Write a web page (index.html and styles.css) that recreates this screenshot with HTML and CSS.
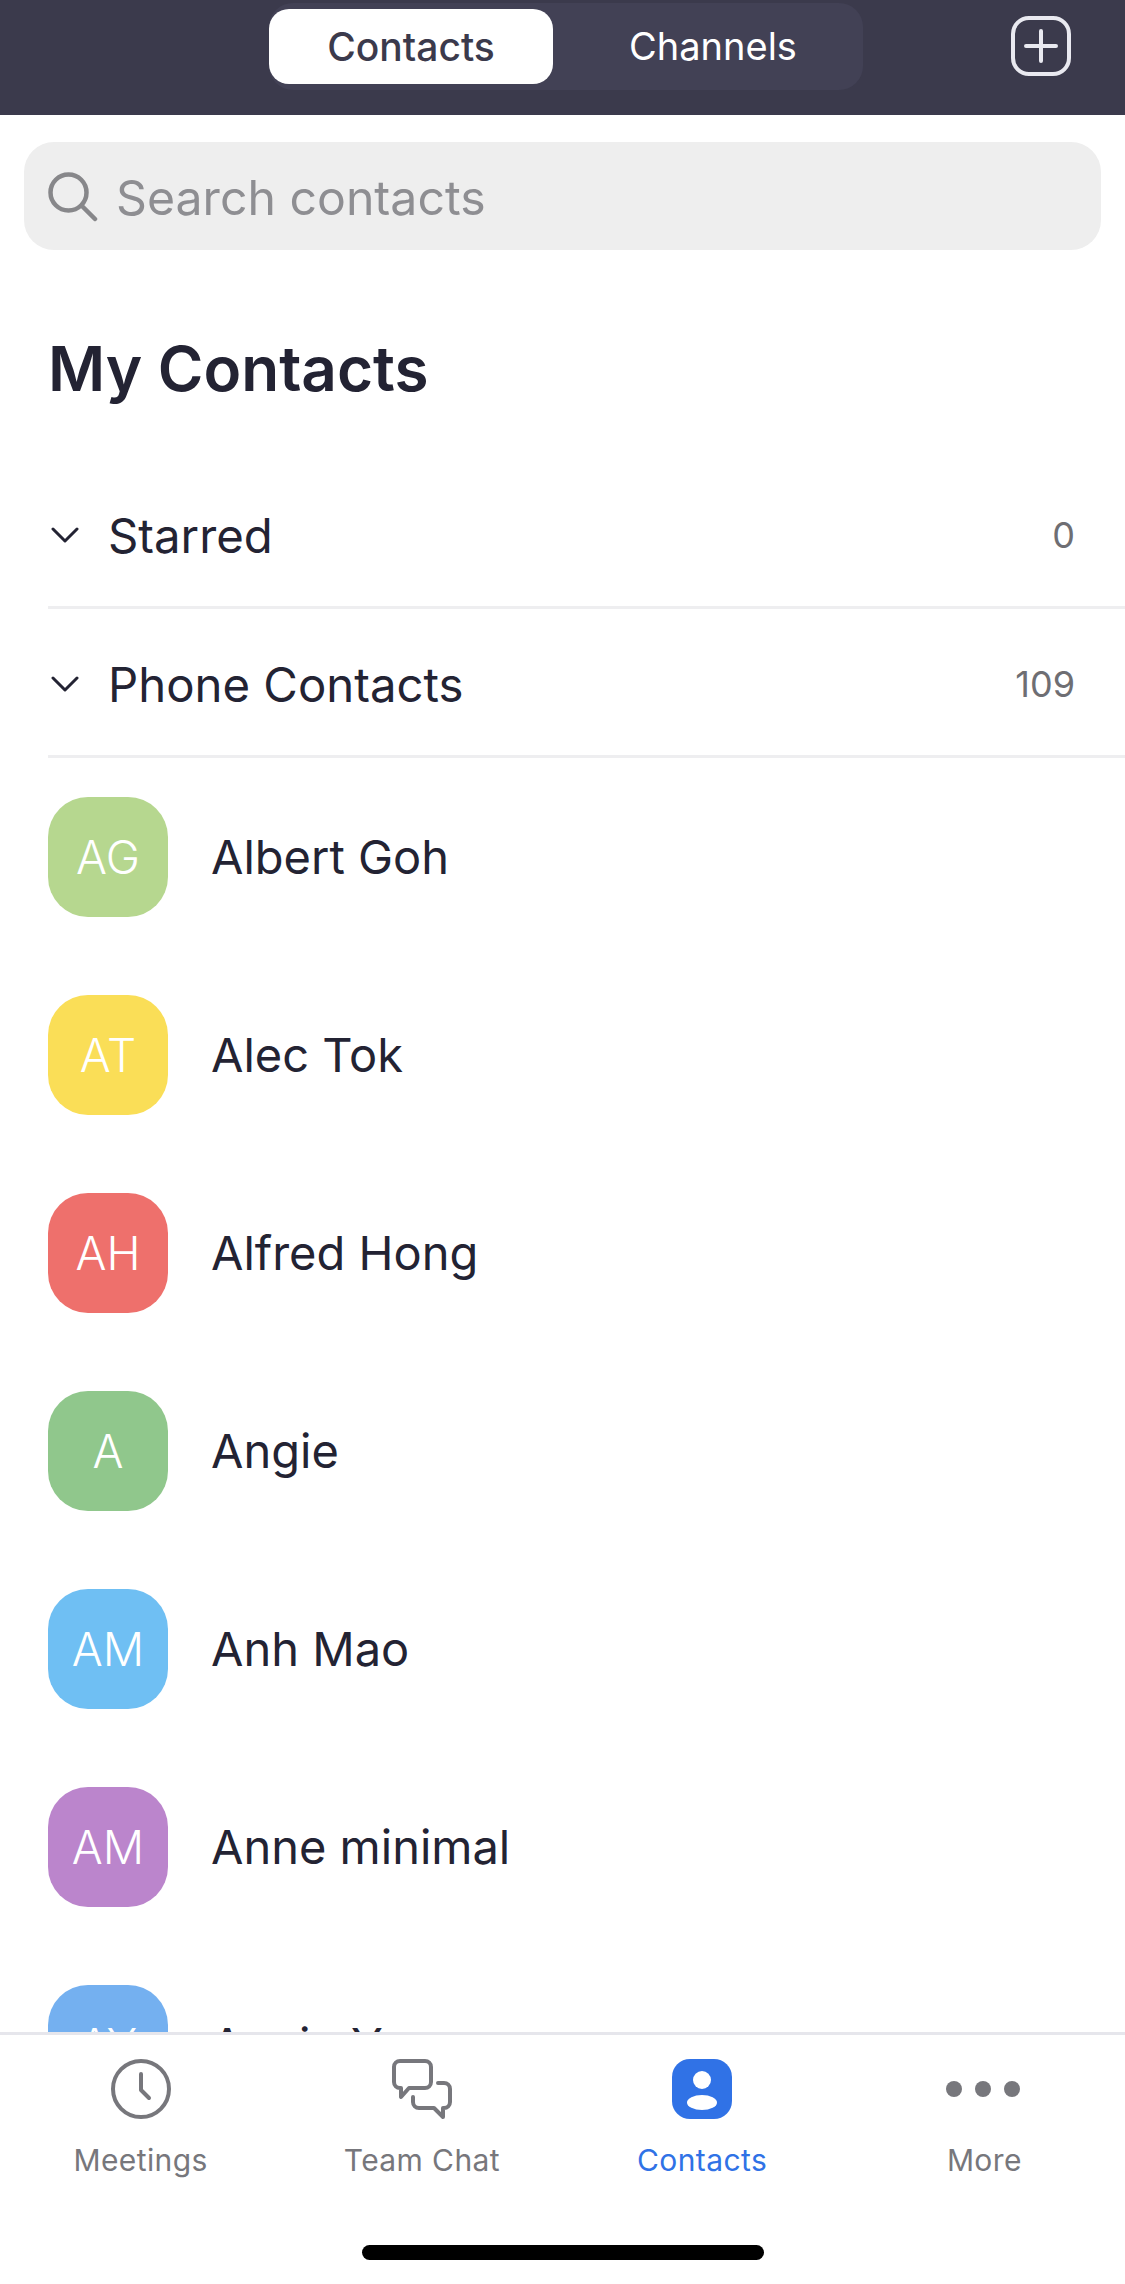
FILE: index.html
```html
<!DOCTYPE html>
<html lang="en">
<head>
    <meta charset="UTF-8">
    <meta name="viewport" content="width=device-width, initial-scale=1.0">
    <title>Contacts</title>
    <link rel="stylesheet" href="styles.css">
</head>
<body>
    <header class="topbar">
        <div class="tabs">
            <div class="tab active">Contacts</div>
            <div class="tab">Channels</div>
        </div>
        <svg class="add-icon" viewBox="0 0 60 60" fill="none" stroke="#e9e9f0" stroke-width="4" stroke-linecap="round">
            <rect x="2" y="2" width="56" height="56" rx="16"/>
            <path d="M30 15V45M15 30H45"/>
        </svg>
    </header>

    <main class="content">
        <div class="search">
            <svg class="search-icon" viewBox="0 0 50 50" fill="none" stroke="#87878a" stroke-width="4.5" stroke-linecap="round">
                <circle cx="20.5" cy="20.5" r="18"/>
                <path d="M33.5 33.5L47 47"/>
            </svg>
            <span>Search contacts</span>
        </div>

        <h1>My Contacts</h1>

        <div class="group">
            <svg class="chevron" viewBox="0 0 28 16" fill="none" stroke="#232333" stroke-width="3" stroke-linecap="round" stroke-linejoin="round">
                <path d="M2 2L14 14L26 2"/>
            </svg>
            <span class="group-name">Starred</span>
            <span class="count">0</span>
        </div>
        <div class="group">
            <svg class="chevron" viewBox="0 0 28 16" fill="none" stroke="#232333" stroke-width="3" stroke-linecap="round" stroke-linejoin="round">
                <path d="M2 2L14 14L26 2"/>
            </svg>
            <span class="group-name">Phone Contacts</span>
            <span class="count">109</span>
        </div>

        <div class="contact"><div class="avatar green">AG</div><span>Albert Goh</span></div>
        <div class="contact"><div class="avatar yellow">AT</div><span>Alec Tok</span></div>
        <div class="contact"><div class="avatar red">AH</div><span>Alfred Hong</span></div>
        <div class="contact"><div class="avatar leaf">A</div><span>Angie</span></div>
        <div class="contact"><div class="avatar sky">AM</div><span>Anh Mao</span></div>
        <div class="contact"><div class="avatar purple">AM</div><span>Anne minimal</span></div>
        <div class="contact"><div class="avatar blue">AY</div><span>Annie Y</span></div>
    </main>

    <nav class="tabbar">
        <div class="nav-item">
            <svg viewBox="0 0 60 60" fill="none" stroke="#77777c" stroke-width="4" stroke-linecap="round" stroke-linejoin="round">
                <circle cx="30" cy="30" r="28"/>
                <path d="M30 15V31L38 39"/>
            </svg>
            <span>Meetings</span>
        </div>
        <div class="nav-item">
            <svg viewBox="0 0 60 60" fill="none" stroke="#77777c" stroke-width="4" stroke-linecap="round" stroke-linejoin="round">
                <path d="M8 2H33A6 6 0 0 1 39 8V23A6 6 0 0 1 33 29H17L9 38V29H8A6 6 0 0 1 2 23V8A6 6 0 0 1 8 2Z"/>
                <path d="M46 24H52A6 6 0 0 1 58 30V43A6 6 0 0 1 52 49H51V58L42 49H27A6 6 0 0 1 21 43V38"/>
            </svg>
            <span>Team Chat</span>
        </div>
        <div class="nav-item current">
            <svg viewBox="0 0 60 60">
                <rect width="60" height="60" rx="18" fill="#3072e6"/>
                <circle cx="30" cy="21" r="9" fill="#fff"/>
                <ellipse cx="30" cy="43.5" rx="15" ry="7.5" fill="#fff"/>
            </svg>
            <span>Contacts</span>
        </div>
        <div class="nav-item">
            <svg viewBox="0 0 60 60" fill="#77777c">
                <circle cx="0" cy="30" r="8"/>
                <circle cx="29" cy="30" r="8"/>
                <circle cx="58" cy="30" r="8"/>
            </svg>
            <span>More</span>
        </div>
    </nav>

    <div class="home-bar"></div>
</body>
</html>
```

FILE: styles.css
```css
* {
    box-sizing: border-box;
}

html, body {
    margin: 0;
    height: 2284px;
    overflow: hidden;
}

body {
    display: flex;
    flex-direction: column;
    width: 1125px;
    background: #fff;
    font-family: 'Inter', 'Liberation Sans', sans-serif;
    color: #232333;
}

/* Top bar */
.topbar {
    flex: none;
    display: grid;
    grid-template-columns: 269px auto 1fr;
    height: 115px;
    padding-top: 3px;
    background: #3b3a4c;
}

.tabs {
    grid-column: 2;
    display: flex;
    align-items: center;
    width: 594px;
    height: 87px;
    border-radius: 24px;
    background: #424155;
}

.tab {
    width: 310px;
    height: 75px;
    padding-left: 10px;
    line-height: 75px;
    text-align: center;
    font-size: 38px;
    color: #fff;
    border-radius: 20px;
}

.tab.active {
    width: 284px;
    padding-left: 0;
    background: #fff;
    color: #3b3a4c;
    font-size: 39px;
    font-weight: 500;
}

.add-icon {
    grid-column: 3;
    justify-self: end;
    width: 60px;
    height: 60px;
    margin: 13px 54px 0 0;
}

/* Search and list */
.content {
    flex: 1;
    min-height: 0;
    overflow: hidden;
}

.search {
    display: flex;
    align-items: center;
    gap: 18px;
    height: 108px;
    margin: 27px 24px 0;
    padding: 2px 0 0 24px;
    border-radius: 30px;
    background: #eee;
    font-size: 48.2px;
    color: #8e8e92;
}

.search-icon {
    width: 50px;
    height: 50px;
}

h1 {
    margin: 0;
    padding: 85px 48px 0;
    height: 210px;
    font-size: 62px;
    font-weight: 600;
    line-height: 68px;
}

.group {
    display: flex;
    align-items: center;
    height: 149px;
    margin-left: 48px;
    padding: 4px 50px 0 3px;
    border-bottom: 3px solid #eeeef0;
    font-size: 47.3px;
}

.chevron {
    width: 28px;
    height: 16px;
    margin-right: 29px;
}

.group-name {
    flex: 1;
}

.count {
    font-size: 36px;
    color: #6e6e73;
}

.contact {
    display: flex;
    align-items: center;
    gap: 43px;
    height: 198px;
    padding-left: 48px;
    font-size: 47px;
}

.contact span {
    margin-top: -2px;
}

.avatar {
    flex: none;
    width: 120px;
    height: 120px;
    line-height: 120px;
    text-align: center;
    border-radius: 40px;
    font-size: 46px;
    font-weight: 300;
    color: #fff;
}

.green { background: #b6d78f; }
.yellow { background: #fade57; }
.red { background: #ee706c; }
.leaf { background: #90c78c; }
.sky { background: #6fbff3; }
.purple { background: #bb85cc; }
.blue { background: #74b0f0; }

/* Bottom nav */
.tabbar {
    flex: none;
    display: grid;
    grid-template-columns: repeat(4, 1fr);
    height: 252px;
    padding-top: 24px;
    border-top: 3px solid #e6e6ec;
    background: #fff;
}

.nav-item {
    display: flex;
    flex-direction: column;
    align-items: center;
    gap: 23px;
    font-size: 30px;
    letter-spacing: 0.4px;
    color: #77777c;
}

.nav-item svg {
    width: 60px;
    height: 60px;
    overflow: visible;
}

.nav-item.current {
    color: #3072e6;
    transform: translateX(-1px);
}

.home-bar {
    position: absolute;
    left: 362px;
    top: 2245px;
    width: 402px;
    height: 15px;
    border-radius: 8px;
    background: #000;
}
```
